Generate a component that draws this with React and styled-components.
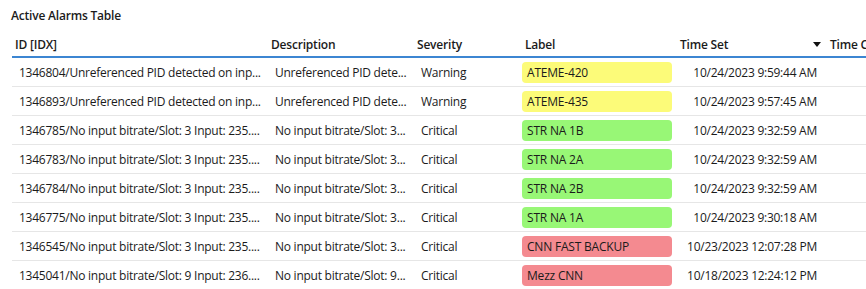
import styled, { createGlobalStyle } from 'styled-components';

const Global = createGlobalStyle`
  html, body { margin: 0; padding: 0; background: #fff; }
  body {
    font-family: "Open Sans", "Noto Sans", Arial, sans-serif;
    color: #1b1b1b;
    overflow: hidden;
  }
`;

const COLS = '256px 146px 106px 156px 146px 1fr';

const Panel = styled.div`
  width: 866px;
  height: 289px;
  overflow: hidden;
  padding: 8px 0 0 0;
  box-sizing: border-box;
`;

const Title = styled.div`
  font-size: 12px;
  font-weight: 600;
  padding-left: 11px;
  height: 18px;
  line-height: 16px;
  letter-spacing: -0.2px;
`;

const Table = styled.div`
  margin-left: 12px;
  margin-top: 6px;
`;

const HeaderRow = styled.div`
  display: grid;
  grid-template-columns: ${COLS};
  height: 26px;
  align-items: center;
  border-bottom: 2px solid #3c86d2;
  box-sizing: border-box;
`;

const HeadCell = styled.div`
  font-size: 12px;
  font-weight: 600;
  padding-left: ${({ $pad }) => $pad ?? 3}px;
  white-space: nowrap;
  overflow: hidden;
  letter-spacing: -0.2px;
  display: flex;
  align-items: center;
  justify-content: ${({ $spread }) => ($spread ? 'space-between' : 'flex-start')};
`;

const SortArrow = styled.span`
  width: 0;
  height: 0;
  border-left: 4px solid transparent;
  border-right: 4px solid transparent;
  border-top: 5px solid #111;
  margin-right: 1px;
`;

const Row = styled.div`
  display: grid;
  grid-template-columns: ${COLS};
  height: 29px;
  align-items: center;
  border-bottom: 1px solid #e6e6e6;
  box-sizing: border-box;
`;

const Cell = styled.div`
  font-size: 12px;
  padding-left: ${({ $pad }) => $pad ?? 7}px;
  padding-right: ${({ $right }) => $right ?? 0}px;
  text-align: ${({ $align }) => $align || 'left'};
  white-space: nowrap;
  overflow: hidden;
  letter-spacing: -0.25px;
`;

const PILL = {
  yellow: '#fcfb79',
  green: '#98f776',
  red: '#f48a90',
};

const Pill = styled.div`
  margin-left: 2px;
  width: 150px;
  height: 21px;
  border-radius: 4px;
  background: ${({ $tone }) => PILL[$tone]};
  font-size: 12px;
  line-height: 21px;
  padding-left: 5px;
  box-sizing: border-box;
  white-space: nowrap;
  letter-spacing: -0.2px;
`;

const rows = [
  ['1346804/Unreferenced PID detected on inp...', 'Unreferenced PID dete...', 'Warning', 'ATEME-420', 'yellow', '10/24/2023 9:59:44 AM'],
  ['1346893/Unreferenced PID detected on inp...', 'Unreferenced PID dete...', 'Warning', 'ATEME-435', 'yellow', '10/24/2023 9:57:45 AM'],
  ['1346785/No input bitrate/Slot: 3 Input: 235....', 'No input bitrate/Slot: 3...', 'Critical', 'STR NA 1B', 'green', '10/24/2023 9:32:59 AM'],
  ['1346783/No input bitrate/Slot: 3 Input: 235....', 'No input bitrate/Slot: 3...', 'Critical', 'STR NA 2A', 'green', '10/24/2023 9:32:59 AM'],
  ['1346784/No input bitrate/Slot: 3 Input: 235....', 'No input bitrate/Slot: 3...', 'Critical', 'STR NA 2B', 'green', '10/24/2023 9:32:59 AM'],
  ['1346775/No input bitrate/Slot: 3 Input: 235....', 'No input bitrate/Slot: 3...', 'Critical', 'STR NA 1A', 'green', '10/24/2023 9:30:18 AM'],
  ['1346545/No input bitrate/Slot: 3 Input: 235....', 'No input bitrate/Slot: 3...', 'Critical', 'CNN FAST BACKUP', 'red', '10/23/2023 12:07:28 PM'],
  ['1345041/No input bitrate/Slot: 9 Input: 236....', 'No input bitrate/Slot: 9...', 'Critical', 'Mezz CNN', 'red', '10/18/2023 12:24:12 PM'],
];

export default function App() {
  return (
    <Panel>
      <Global />
      <Title>Active Alarms Table</Title>
      <Table>
        <HeaderRow>
          <HeadCell>ID [IDX]</HeadCell>
          <HeadCell>Description</HeadCell>
          <HeadCell>Severity</HeadCell>
          <HeadCell $pad={5}>Label</HeadCell>
          <HeadCell $pad={4} $spread>
            Time Set
            <SortArrow />
          </HeadCell>
          <HeadCell $pad={8}>Time Cleared</HeadCell>
        </HeaderRow>
        {rows.map(([id, desc, sev, label, tone, time]) => (
          <Row key={id}>
            <Cell>{id}</Cell>
            <Cell>{desc}</Cell>
            <Cell>{sev}</Cell>
            <Cell $pad={0}>
              <Pill $tone={tone}>{label}</Pill>
            </Cell>
            <Cell $align="right" $right={5}>{time}</Cell>
            <Cell />
          </Row>
        ))}
      </Table>
    </Panel>
  );
}
